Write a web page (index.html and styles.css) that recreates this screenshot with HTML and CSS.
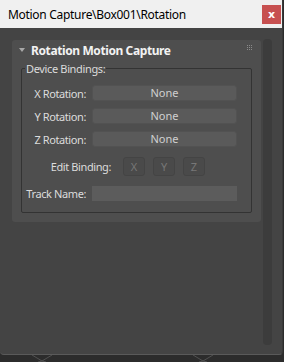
FILE: index.html
```html
<!DOCTYPE html>
<html lang="en">
<head>
  <meta charset="UTF-8" />
  <title>Motion Capture</title>
  <link rel="stylesheet" href="styles.css">
</head>
<body>
  <div class="window">
    <div class="title-bar">
      <span class="title">Motion Capture\Box001\Rotation</span>
      <button class="close">x</button>
    </div>

    <div class="window-body">
      <div class="rollout">
        <div class="rollout-head">
          <svg class="arrow" width="6" height="4" viewBox="0 0 6 4"><polygon points="0,0 6,0 3,4" fill="#a8a8a8"/></svg>
          <span class="rollout-title">Rotation Motion Capture</span>
          <svg class="grip" width="6" height="6" viewBox="0 0 6 6" fill="#8a8a8a">
            <rect x="0" y="0" width="1" height="1"/><rect x="2" y="0" width="1" height="1"/><rect x="4" y="0" width="1" height="1"/>
            <rect x="0" y="2" width="1" height="1"/><rect x="2" y="2" width="1" height="1"/><rect x="4" y="2" width="1" height="1"/>
            <rect x="0" y="4" width="1" height="1"/><rect x="2" y="4" width="1" height="1"/><rect x="4" y="4" width="1" height="1"/>
          </svg>
        </div>

        <fieldset class="group">
          <legend>Device Bindings:</legend>

          <div class="fields">
            <label>X Rotation:</label>
            <div class="binding">None</div>
            <label>Y Rotation:</label>
            <div class="binding">None</div>
            <label>Z Rotation:</label>
            <div class="binding">None</div>
          </div>

          <div class="edit-row">
            <label>Edit Binding:</label>
            <button class="axis" disabled>X</button>
            <button class="axis" disabled>Y</button>
            <button class="axis" disabled>Z</button>
          </div>

          <div class="fields track">
            <label>Track Name:</label>
            <input class="track-input" type="text" value="">
          </div>
        </fieldset>
      </div>

      <div class="scroll-track"></div>
    </div>
  </div>

  <svg class="backdrop" width="284" height="7" viewBox="0 0 284 7">
    <path d="M32 0 L42 6 L52 0 M38 7 L42 6 L46 7" stroke="#505050" stroke-width="1" fill="none"/>
    <path d="M193 0 L203 6 L213 0 M199 7 L203 6 L207 7" stroke="#505050" stroke-width="1" fill="none"/>
  </svg>
</body>
</html>
```

FILE: styles.css
```css
* {
  box-sizing: border-box;
}

body {
  margin: 0;
  width: 284px;
  height: 362px;
  overflow: hidden;
  background: #2c2c2c;
  font-family: 'Noto Sans', 'Liberation Sans', sans-serif;
  font-size: 11px;
  color: #dcdcdc;
}

.window {
  width: 283px;
  height: 355px;
  display: flex;
  flex-direction: column;
  background: #444444;
  border-right: 1px solid #3a3a3a;
  border-bottom: 1px solid #5a5a5a;
  border-radius: 0 0 4px 4px;
}

.title-bar {
  height: 28px;
  flex: none;
  display: flex;
  align-items: center;
  justify-content: space-between;
  padding-left: 8px;
  padding-right: 1px;
  background: #f0f0f0;
  color: #000;
}

.title {
  font-size: 12px;
  letter-spacing: -0.3px;
}

.close {
  width: 19px;
  height: 19px;
  margin-top: 1px;
  padding: 0;
  border: none;
  background: #c75050;
  color: #fff;
  font-family: 'DejaVu Sans', sans-serif;
  font-size: 11px;
  font-weight: bold;
  line-height: 17px;
}

.window-body {
  flex: 1;
  display: flex;
  align-items: flex-start;
  padding: 11px 0 0 12px;
}

.rollout {
  width: 249px;
  height: 182px;
  margin-top: 1px;
  padding: 0 9px;
  background: #4e4e4e;
  border-radius: 3px;
}

.rollout-head {
  height: 20px;
  display: flex;
  align-items: center;
}

.arrow {
  margin-left: -2px;
  margin-right: 6px;
}

.rollout-title {
  font-size: 12px;
  font-weight: bold;
  letter-spacing: -0.4px;
  color: #f2f2f2;
  flex: 1;
}

.grip {
  margin-right: -1px;
  margin-top: -4px;
}

.group {
  margin: 1px 0 0;
  padding: 0 0 10px;
  height: 152px;
  border: 1px solid #333333;
  border-radius: 2px;
}

.group legend {
  margin-left: 3px;
  padding: 0 1px;
  letter-spacing: -0.35px;
  color: #dcdcdc;
}

.fields {
  display: grid;
  grid-template-columns: 70px 145px;
  row-gap: 7px;
  align-items: center;
  margin-top: 9px;
}

.fields label {
  text-align: right;
  padding-right: 6px;
  white-space: nowrap;
  letter-spacing: -0.4px;
}

.binding {
  height: 16px;
  line-height: 14px;
  text-align: center;
  background: #5a5a5a;
  border: 1px solid #525252;
  border-radius: 3px;
  color: #d0d0d0;
}

.edit-row {
  display: flex;
  align-items: center;
  margin-top: 10px;
}

.edit-row label {
  width: 89px;
  text-align: right;
  margin-right: 12px;
  white-space: nowrap;
  letter-spacing: -0.4px;
}

.axis {
  width: 22px;
  height: 19px;
  margin-right: 8px;
  padding: 0;
  background: #4a4a4a;
  border: 1px solid #444444;
  border-radius: 3px;
  color: #777777;
  font-family: inherit;
  font-size: 11px;
}

.fields.track {
  margin-top: 10px;
}

.track-input {
  height: 15px;
  border: none;
  background: #5c5c5c;
  padding: 0;
  outline: none;
}

.scroll-track {
  width: 9px;
  height: 306px;
  margin-left: 2px;
  background: #3c3c3c;
  border-radius: 4px;
}

.backdrop {
  display: block;
}
```
